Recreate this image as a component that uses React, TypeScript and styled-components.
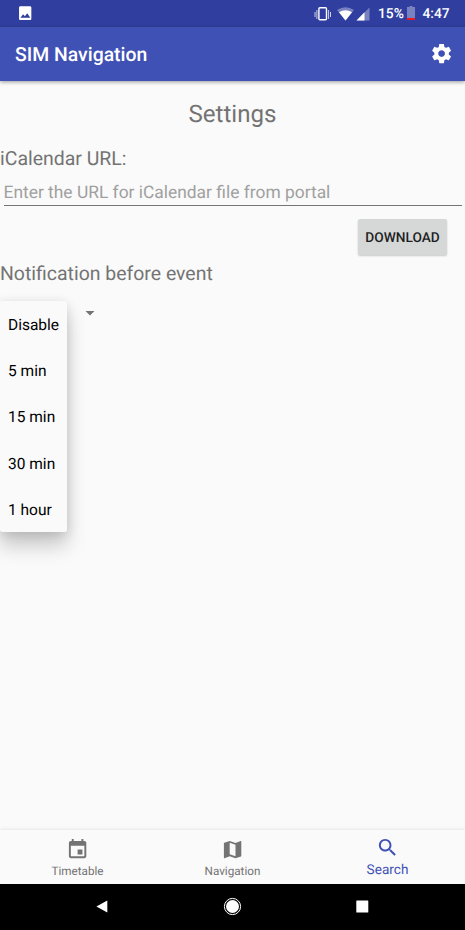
import React from 'react';
import styled, { createGlobalStyle } from 'styled-components';

const GlobalStyle = createGlobalStyle`
  * { box-sizing: border-box; }
  body {
    margin: 0;
    background: #fafafa;
    font-family: Roboto, sans-serif;
    text-rendering: geometricPrecision;
  }
  svg { display: block; flex: none; }
`;

const Screen = styled.div`
  width: 465px;
  height: 930px;
  display: flex;
  flex-direction: column;
  overflow: hidden;
  background: #fafafa;
  color: #737373;
`;

const StatusBar = styled.header`
  height: 27px;
  flex: none;
  display: flex;
  align-items: center;
  padding: 0 14.5px 0 17px;
  background: #303f9f;
  color: #fff;
  font-size: 13.8px;
  font-weight: 500;
  line-height: 27px;
`;

const StatusIcons = styled.div`
  margin-left: auto;
  display: flex;
  align-items: center;
`;

const BatteryIcon = styled.svg`
  margin-top: -1px;
`;

const StatusText = styled.span<{ $width: number; $gap: number }>`
  margin-left: ${(p) => p.$gap}px;
  width: ${(p) => p.$width}px;
  white-space: nowrap;
  padding-top: 2px;
`;

const AppBar = styled.div`
  height: 54px;
  flex: none;
  position: relative;
  display: flex;
  align-items: center;
  justify-content: space-between;
  padding: 0 11.8px 0 15px;
  background: #3f51b5;
  color: #fff;
  box-shadow: 0 1px 4px rgba(0, 0, 0, 0.4);
`;

const AppTitle = styled.h1`
  margin: 0;
  padding-top: 2px;
  font-size: 19.4px;
  font-weight: 500;
  line-height: 54px;
`;

const Content = styled.main`
  flex: 1;
  display: flex;
  flex-direction: column;
`;

const PageTitle = styled.h2`
  margin: 17px 0 0;
  font-size: 24.1px;
  font-weight: 400;
  line-height: 32px;
  text-align: center;
`;

const Label = styled.label<{ $top: number }>`
  display: block;
  margin-top: ${(p) => p.$top}px;
  font-size: 19.45px;
  line-height: 24px;
`;

const UrlInput = styled.input`
  display: block;
  margin: 6px 3.5px 0;
  height: 29px;
  padding: 4px 0 0;
  border: 0;
  border-bottom: 1px solid #757575;
  border-radius: 0;
  outline: 0;
  background: transparent;
  font: 400 17.4px Roboto, sans-serif;
  text-rendering: geometricPrecision;
  &::placeholder { color: #a0a0a0; opacity: 1; }
`;

const DownloadButton = styled.button`
  align-self: flex-end;
  margin: 13px 18px 0 0;
  width: 89px;
  height: 36px;
  padding: 1px 0 0;
  border: 0;
  border-radius: 2px;
  background: #d6d7d7;
  color: #1f1f1f;
  box-shadow: 0 1px 2px rgba(0, 0, 0, 0.2);
  font: 500 13.7px Roboto, sans-serif;
  text-rendering: geometricPrecision;
`;

const Spinner = styled.div`
  position: relative;
  height: 46px;
  margin-top: 4px;
  padding: 20px 0 0 78px;
`;

const Menu = styled.ul`
  position: absolute;
  left: 0;
  top: 11px;
  width: 67px;
  margin: 0;
  padding: 0;
  list-style: none;
  background: #fafafa;
  border-radius: 2px;
  box-shadow: 0 14px 20px rgba(0, 0, 0, 0.2), 0 2px 12px rgba(0, 0, 0, 0.12);
`;

const MenuItem = styled.li`
  height: 46.2px;
  padding-left: 8px;
  color: #000;
  font-size: 15.5px;
  line-height: 48.6px;
  white-space: nowrap;
`;

const BottomNav = styled.nav`
  height: 54px;
  flex: none;
  display: flex;
  box-shadow: 0 -1px 3px rgba(0, 0, 0, 0.08);
`;

const Tab = styled.a<{ $active?: boolean }>`
  flex: 1;
  display: flex;
  flex-direction: column;
  align-items: center;
  padding-top: ${(p) => (p.$active ? 5.5 : 7.6)}px;
  color: ${(p) => (p.$active ? '#3f51b5' : '#737373')};
  font-size: ${(p) => (p.$active ? 13.6 : 11.7)}px;
  line-height: ${(p) => (p.$active ? 23 : 20)}px;
`;

const SystemNav = styled.footer`
  height: 46px;
  flex: none;
  display: flex;
  align-items: center;
  justify-content: center;
  gap: 111px;
  padding-bottom: 1px;
  background: #000;
`;

const icons = {
  gear: 'M19.43 12.98c.04-.32.07-.64.07-.98s-.03-.66-.07-.98l2.11-1.65c.19-.15.24-.42.12-.64l-2-3.46c-.12-.22-.39-.3-.61-.22l-2.49 1c-.52-.4-1.08-.73-1.69-.98l-.38-2.65C14.46 2.18 14.25 2 14 2h-4c-.25 0-.46.18-.49.42l-.38 2.65c-.61.25-1.17.59-1.69.98l-2.49-1c-.23-.09-.49 0-.61.22l-2 3.46c-.13.22-.07.49.12.64l2.11 1.65c-.04.32-.07.65-.07.98s.03.66.07.98l-2.11 1.65c-.19.15-.24.42-.12.64l2 3.46c.12.22.39.3.61.22l2.49-1c.52.4 1.08.73 1.69.98l.38 2.65c.03.24.24.42.49.42h4c.25 0 .46-.18.49-.42l.38-2.65c.61-.25 1.17-.59 1.69-.98l2.49 1c.23.09.49 0 .61-.22l2-3.46c.12-.22.07-.49-.12-.64l-2.11-1.65zM12 15.5c-1.93 0-3.5-1.57-3.5-3.5s1.57-3.5 3.5-3.5 3.5 1.57 3.5 3.5-1.57 3.5-3.5 3.5z',
  image: 'M21 20V4c0-1.100-.9-2-2-2H5c-1.100 0-2 .9-2 2v16c0 1.100.9 2 2 2h14c1.100 0 2-.9 2-2zM5 18.500l4-5 2.500 3 3.500-4.500 4.500 6.500z',
  event: 'M17 12h-5v5h5v-5zM16 1v2H8V1H6v2H5c-1.11 0-1.99.9-1.99 2L3 19c0 1.1.89 2 2 2h14c1.1 0 2-.9 2-2V5c0-1.1-.9-2-2-2h-1V1h-2zm3 18H5V8h14v11z',
  map: 'M20.5 3l-.16.03L15 5.1 9 3 3.36 4.9c-.21.07-.36.25-.36.48V20.5c0 .28.22.5.5.5l.16-.03L9 18.9l6 2.1 5.64-1.9c.21-.07.36-.25.36-.48V3.5c0-.28-.22-.5-.5-.5zM15 19l-6-2.11V5l6 2.11V19z',
  search: 'M15.5 14h-.79l-.28-.27C15.41 12.59 16 11.11 16 9.5 16 5.91 13.09 3 9.5 3S3 5.91 3 9.5 5.91 16 9.5 16c1.61 0 3.09-.59 4.23-1.57l.27.28v.79l5 4.99L20.49 19l-4.99-5zm-6 0C7.01 14 5 11.99 5 9.5S7.01 5 9.5 5 14 7.01 14 9.5 11.99 14 9.5 14z',
};

const Icon = ({ name, size = 23.2 }: { name: keyof typeof icons; size?: number }) => (
  <svg width={size} height={size} viewBox="0 0 24 24" fill="currentColor">
    <path d={icons[name]} fillRule="evenodd" />
  </svg>
);

const options = ['Disable', '5 min', '15 min', '30 min', '1 hour'];

export default function App() {
  return (
    <>
      <GlobalStyle />
      <Screen>
        <StatusBar>
          <Icon name="image" size={16.4} />
          <StatusIcons>
            <svg width="56" height="16" viewBox="0 0 56 16">
              <rect x="4.900" y="1.700" width="7.600" height="12.100" rx="1" fill="none" stroke="#fff" strokeWidth="1.400" />
              <path d="M1 6v5M2.900 4v9M14.600 4v9M16.500 6v5" stroke="#fff" strokeWidth="1" opacity=".75" />
              <path d="M23 4Q31.500-1.500 40 4L31.500 14.500z" fill="#7882c0" />
              <path d="M25 6.200Q31.500 2.500 38 6.200L31.500 14.500z" fill="#fff" />
              <path d="M42.500 14.500L55.500 1.500v13z" fill="#7882c0" />
              <path d="M42.500 14.500L50.500 6.300v8.200z" fill="#fff" />
            </svg>
            <StatusText $gap={8} $width={29}>15%</StatusText>
            <BatteryIcon width="8" height="14" viewBox="0 0 8 14">
              <path d="M2.500 0h3v1H8v13H0V1h2.500z" fill="#7882c0" />
              <path d="M0 12h8v2H0z" fill="#f01820" />
            </BatteryIcon>
            <StatusText $gap={7.5} $width={28}>4:47</StatusText>
          </StatusIcons>
        </StatusBar>
        <AppBar>
          <AppTitle>SIM Navigation</AppTitle>
          <Icon name="gear" />
        </AppBar>
        <Content>
          <PageTitle>Settings</PageTitle>
          <Label $top={17} htmlFor="url">iCalendar URL:</Label>
          <UrlInput id="url" placeholder="Enter the URL for iCalendar file from portal" />
          <DownloadButton>DOWNLOAD</DownloadButton>
          <Label as="div" $top={7}>Notification before event</Label>
          <Spinner>
            <svg width="24" height="8" viewBox="0 0 24 8"><path d="M7.500 1h9L12 5.500z" fill="#737373" /></svg>
            <Menu>
              {options.map((o) => <MenuItem key={o}>{o}</MenuItem>)}
            </Menu>
          </Spinner>
        </Content>
        <BottomNav>
          <Tab><Icon name="event" />Timetable</Tab>
          <Tab><Icon name="map" />Navigation</Tab>
          <Tab $active><Icon name="search" />Search</Tab>
        </BottomNav>
        <SystemNav>
          <svg width="19" height="19" viewBox="0 0 19 19"><path d="M3.400 9.500L14.300 3.500v12z" fill="#fff" /></svg>
          <svg width="19" height="19" viewBox="0 0 19 19"><circle cx="9.500" cy="9.500" r="8.100" fill="none" stroke="#fff" strokeWidth="1" /><circle cx="9.500" cy="9.500" r="6.500" fill="#fff" /></svg>
          <svg width="19" height="19" viewBox="0 0 19 19"><rect x="3.300" y="3.500" width="12" height="12" rx=".5" fill="#fff" /></svg>
        </SystemNav>
      </Screen>
    </>
  );
}
